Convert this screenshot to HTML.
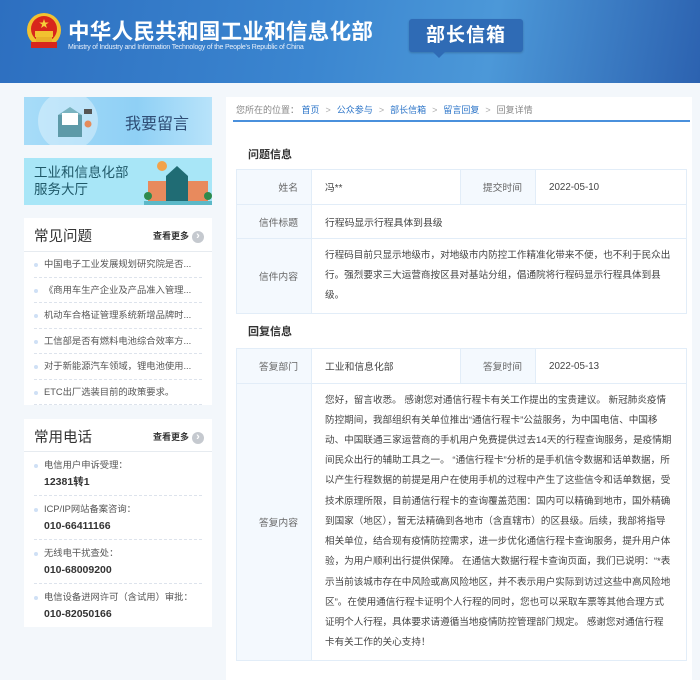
<!DOCTYPE html>
<html><head><meta charset="utf-8"><style>
*{margin:0;padding:0;box-sizing:border-box}
body{width:700px;height:680px;overflow:hidden;background:#f3f7fb;font-family:"Liberation Sans","Noto Sans CJK SC",sans-serif;color:#333;position:relative}
.hd{position:absolute;left:0;top:0;width:700px;height:83px;background:linear-gradient(100deg,#2d6fc0 0%,#3b86d0 45%,#4c98d8 70%,#2c62b0 100%)}
.t1{position:absolute;left:68px;top:15px;color:#fff;font-size:21.5px;font-weight:bold;letter-spacing:0.3px;white-space:nowrap}
.t2{position:absolute;left:68px;top:44px;color:#e8f0fa;font-size:7px;white-space:nowrap;letter-spacing:-0.2px}
.badge{position:absolute;left:409px;top:19px;width:114px;height:33px;background:#2f6bb5;border-radius:3px;color:#fff;font-size:19px;font-weight:bold;text-align:center;line-height:33px;letter-spacing:1px;box-shadow:0 1px 2px rgba(0,0,0,.2)}
.badge:after{content:"";position:absolute;left:24px;top:33px;border:6px solid transparent;border-top-color:#2f6bb5}
.side{position:absolute;left:24px;width:188px}
.box{background:#fff}
.bh{height:34px;border-bottom:1px solid #e6ebf0;position:relative}
.bh b{position:absolute;left:10px;top:7px;font-size:14.5px;font-weight:normal;color:#333}
.bh i{position:absolute;right:8px;top:11px;font-style:normal;font-size:9px;color:#333;font-weight:bold}
.bh i:after{content:"›";display:inline-block;width:12px;height:12px;border-radius:50%;background:#c5c9cf;color:#fff;text-align:center;line-height:11px;margin-left:3px;font-size:11px;vertical-align:middle}
.li{margin:0 10px;height:25.5px;border-bottom:1px dashed #dde3ec;font-size:9.3px;color:#555;line-height:25px;padding-left:10px;position:relative;white-space:nowrap;overflow:hidden}
.li:before,.ph:before{content:"";position:absolute;left:0;top:11px;width:4px;height:4px;border-radius:50%;background:#cfe0f5}
.ph{margin:0 10px;height:44px;border-bottom:1px dashed #dde3ec;padding-left:10px;position:relative;font-size:9.3px;color:#555;padding-top:6px;line-height:15px}
.ph b{display:block;font-size:10.5px;color:#333;margin-top:2px}
.ph:before{top:12px}
.main{position:absolute;left:226px;top:97px;width:466px;height:583px;background:#fff}
.bc{position:absolute;left:10px;top:6px;font-size:9px;color:#888;white-space:nowrap}
.bc a{color:#2b74c8}
.bc s{text-decoration:none;color:#aaa;margin:0 6px}
.line{position:absolute;left:7px;top:23px;width:457px;height:2px;background:#4a90dc}
.h{position:absolute;left:22px;font-size:11px;font-weight:bold;color:#333}
table{position:absolute;left:10px;width:451px;border-collapse:collapse;font-size:9.8px}
td{border:1px solid #e2edf8;padding:0 13px;color:#444}
td.l{background:#f4f9fe;text-align:right;color:#666;width:75px}
td.m{width:149px}
td.p{line-height:20.2px;font-size:9.6px}
</style></head><body>
<div class="hd">
<svg style="position:absolute;left:24px;top:12px" width="40" height="42" viewBox="0 0 40 42"><circle cx="20" cy="18" r="17" fill="#f2c230"/><circle cx="20" cy="17" r="13" fill="#d8261c"/><polygon points="20,7 21.2,10.5 24.8,10.5 21.8,12.6 23,16 20,14 17,16 18.2,12.6 15.2,10.5 18.8,10.5" fill="#f5d03a"/><rect x="11" y="19" width="18" height="6" fill="#f2c230"/><rect x="7" y="30" width="26" height="6" fill="#d8261c"/><rect x="12" y="25" width="16" height="5" fill="#e9b22a"/></svg>
<div class="t1">中华人民共和国工业和信息化部</div>
<div class="t2">Ministry of Industry and Information Technology of the People's Republic of China</div>
<div class="badge">部长信箱</div>
</div>
<div class="side" style="top:97px;height:48px;background:linear-gradient(90deg,#a7dcf8,#8fd0f5 60%,#b8e3fa);overflow:hidden">
<div style="position:absolute;left:14px;top:-6px;width:60px;height:60px;border-radius:50%;background:rgba(255,255,255,.35)"></div>
<svg style="position:absolute;left:28px;top:8px" width="60" height="36"><rect x="6" y="10" width="24" height="22" fill="#5e9aa8"/><polygon points="6,10 18,2 30,10" fill="#7ab3c0"/><rect x="10" y="8" width="16" height="12" fill="#fff"/><rect x="32" y="4" width="8" height="5" fill="#555"/><circle cx="36" cy="19" r="3.5" fill="#e58b5a"/></svg>
<div style="position:absolute;left:101px;top:13px;font-size:16px;color:#2e4d75">我要留言</div>
</div>
<div class="side" style="top:158px;height:47px;background:#a8e6f7;overflow:hidden">
<div style="position:absolute;left:10px;top:6px;font-size:13.5px;color:#1f5868;line-height:17px">工业和信息化部<br>服务大厅</div>
<svg style="position:absolute;left:120px;top:0" width="68" height="47"><circle cx="18" cy="8" r="5" fill="#f2a24a"/><rect x="4" y="23" width="60" height="20" fill="#e88a5d"/><polygon points="22,18 33,8 44,18 44,43 22,43" fill="#206c74"/><rect x="0" y="43" width="68" height="4" fill="#5cb9c8"/><circle cx="4" cy="38" r="4" fill="#2e8a4c"/><circle cx="64" cy="38" r="4" fill="#2e8a4c"/></svg>
</div>
<div class="side box" style="top:218px;height:187px">
<div class="bh"><b>常见问题</b><i>查看更多</i></div>
<div class="li">中国电子工业发展规划研究院是否...</div>
<div class="li">《商用车生产企业及产品准入管理...</div>
<div class="li">机动车合格证管理系统新增品牌时...</div>
<div class="li">工信部是否有燃料电池综合效率方...</div>
<div class="li">对于新能源汽车领域，锂电池使用...</div>
<div class="li">ETC出厂选装目前的政策要求。</div>
</div>
<div class="side box" style="top:419px;height:208px">
<div class="bh" style="height:33px"><b>常用电话</b><i>查看更多</i></div>
<div class="ph">电信用户申诉受理：<b>12381转1</b></div>
<div class="ph">ICP/IP网站备案咨询：<b>010-66411166</b></div>
<div class="ph">无线电干扰查处：<b>010-68009200</b></div>
<div class="ph" style="border:none">电信设备进网许可（含试用）审批：<b>010-82050166</b></div>
</div>
<div class="main">
<div class="bc">您所在的位置： <a>首页</a><s>&gt;</s><a>公众参与</a><s>&gt;</s><a>部长信箱</a><s>&gt;</s><a>留言回复</a><s>&gt;</s>回复详情</div>
<div class="line"></div>
<div class="h" style="top:49px">问题信息</div>
<table style="top:72px">
<tr style="height:35px"><td class="l">姓名</td><td class="m">冯**</td><td class="l">提交时间</td><td>2022-05-10</td></tr>
<tr style="height:34px"><td class="l">信件标题</td><td colspan="3">行程码显示行程具体到县级</td></tr>
<tr style="height:75px"><td class="l">信件内容</td><td colspan="3" class="p">行程码目前只显示地级市，对地级市内防控工作精准化带来不便，也不利于民众出行。强烈要求三大运营商按区县对基站分组，倡通院将行程码显示行程具体到县级。</td></tr>
</table>
<div class="h" style="top:226px">回复信息</div>
<table style="top:251px">
<tr style="height:35px"><td class="l">答复部门</td><td class="m">工业和信息化部</td><td class="l">答复时间</td><td>2022-05-13</td></tr>
<tr style="height:277px"><td class="l">答复内容</td><td colspan="3" class="p">您好，留言收悉。 感谢您对通信行程卡有关工作提出的宝贵建议。 新冠肺炎疫情防控期间，我部组织有关单位推出“通信行程卡”公益服务，为中国电信、中国移动、中国联通三家运营商的手机用户免费提供过去14天的行程查询服务，是疫情期间民众出行的辅助工具之一。 “通信行程卡”分析的是手机信令数据和话单数据，所以产生行程数据的前提是用户在使用手机的过程中产生了这些信令和话单数据，受技术原理所限，目前通信行程卡的查询覆盖范围：国内可以精确到地市，国外精确到国家（地区），暂无法精确到各地市（含直辖市）的区县级。后续，我部将指导相关单位，结合现有疫情防控需求，进一步优化通信行程卡查询服务，提升用户体验，为用户顺利出行提供保障。 在通信大数据行程卡查询页面，我们已说明：“*表示当前该城市存在中风险或高风险地区，并不表示用户实际到访过这些中高风险地区”。在使用通信行程卡证明个人行程的同时，您也可以采取车票等其他合理方式证明个人行程，具体要求请遵循当地疫情防控管理部门规定。 感谢您对通信行程卡有关工作的关心支持！</td></tr>
</table>
</div>
</body></html>
